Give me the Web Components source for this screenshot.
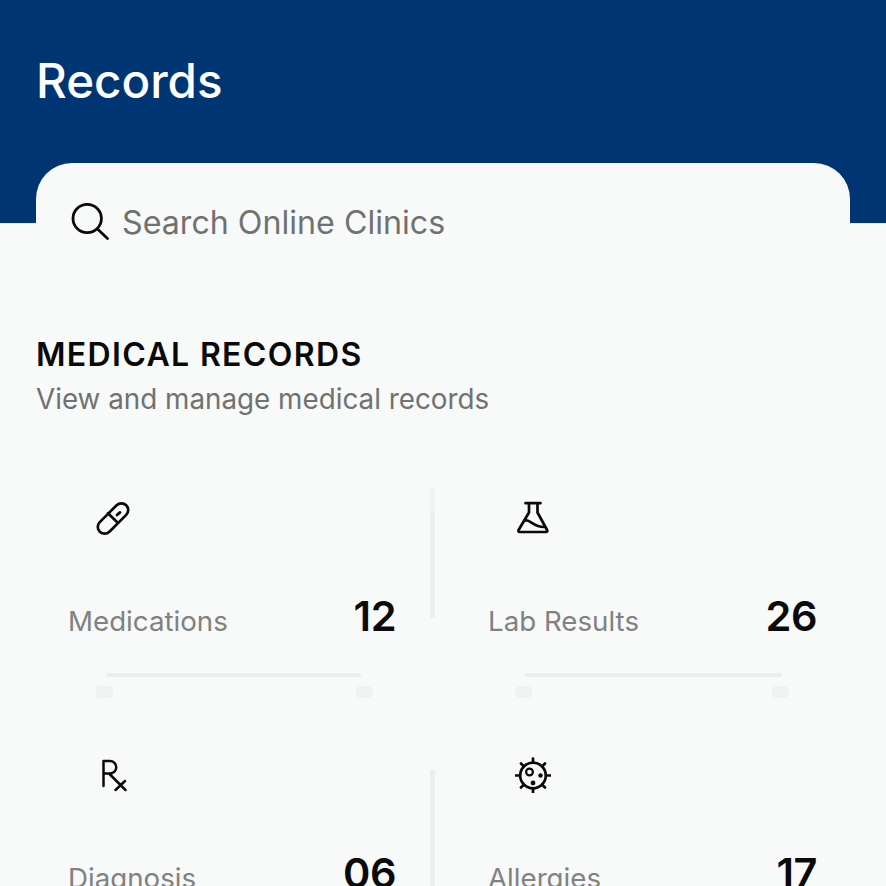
<!DOCTYPE html>
<html><head><meta charset="utf-8"><style>
html,body{margin:0;height:886px;overflow:hidden;background:#f8f9f9;font-family:Inter,"Noto Sans",sans-serif}
</style></head><body>
<records-page></records-page>
<template id="tile-t"><style>
:host{display:flex;flex-direction:column;height:257px;box-sizing:border-box;padding:0 var(--pr,37px) 0 var(--pl,32px);position:relative}
.ic{height:36px;width:36px;margin:0 0 0 27px}
.row{display:flex;justify-content:space-between;align-items:baseline;margin-top:62px;line-height:36px}
.l{font-size:27.7px;color:#808280}
.n{font-size:41.5px;font-weight:600;color:#0a0a0a;letter-spacing:-.5px}
</style><div class="ic"><slot name="icon"></slot></div><div class="row"><span class="l"><slot name="label"></slot></span><span class="n"><slot name="num"></slot></span></div></template>
<script>
class RecordTile extends HTMLElement{constructor(){super();this.attachShadow({mode:'open'}).append(document.getElementById('tile-t').content.cloneNode(true))}}
customElements.define('record-tile',RecordTile);
class SearchCard extends HTMLElement{constructor(){super();this.attachShadow({mode:'open'}).innerHTML=`<style>
:host{display:flex;align-items:center;gap:12px;box-sizing:border-box;height:118px;margin:-61px 36px 0;padding:0 34px 0 34px;background:#f8f9f9;border-radius:36px 36px 0 0;position:relative;color:#707270;font-size:32.2px}
svg{width:40px;height:40px;fill:none;stroke:#0a0a0a;stroke-width:2.8;stroke-linecap:round}
</style><svg viewBox="0 0 40 40"><circle cx="17.2" cy="16.5" r="14.2"/><path d="M27.5 27L37.5 36.5"/></svg><span><slot></slot></span>`}}
customElements.define('search-card',SearchCard);
class RecordsPage extends HTMLElement{constructor(){super();this.attachShadow({mode:'open'}).innerHTML=`<style>
:host{display:block}
header{height:224px;box-sizing:border-box;background:#003574;padding:51px 36px 0;color:#fff;border-bottom:1px solid #e4e6e8;}
h1{margin:0;font-size:47.5px;font-weight:500;line-height:60px}
section{padding:52px 36px 0}
h2{margin:0;font-size:32px;letter-spacing:1.35px;font-weight:600;line-height:44px;color:#0a0a0a}
p{margin:0;font-size:27.8px;line-height:45px;color:#707270}
.grid{display:grid;grid-template-columns:397px 417px;position:relative;padding-top:78px}
.v,.h,.b{position:absolute;background:#eceded}
.v{width:5px;left:394px}
.h{height:4px;top:251px}
.b{width:17px;height:12px;top:264px;background:#f1f2f2;border-radius:4px}
.f{background:#f1f2f2}
</style><header><h1>Records</h1></header>
<search-card>Search Online Clinics</search-card>
<section><h2>MEDICAL RECORDS</h2><p>View and manage medical records</p>
<div class="grid">
<span class="v f" style="top:65px;height:26px"></span>
<span class="v" style="top:91px;height:105px"></span>
<span class="v" style="top:348px;height:116px"></span>
<span class="h" style="left:71px;width:254px"></span>
<span class="h" style="left:489px;width:257px"></span>
<span class="b" style="left:60px"></span><span class="b" style="left:320px"></span>
<span class="b" style="left:479px"></span><span class="b" style="left:736px"></span>
<slot></slot></div></section>`}}
customElements.define('records-page',RecordsPage);
</script>
<script>
const rp=document.querySelector('records-page');
rp.innerHTML=`
<record-tile><svg slot="icon" viewBox="0 0 36 36" width="36" height="36" fill="none" stroke="#0a0a0a" stroke-width="2.7" stroke-linecap="round" stroke-linejoin="round"><rect x="-6.8" y="-18.7" width="13.6" height="37.4" rx="6.8" transform="translate(18 18.5) rotate(45)"/><path d="M13 13.3L21.7 21.7"/><path d="M22 15L25 12.4" stroke-width="2.8"/></svg><span slot="label">Medications</span><span slot="num">12</span></record-tile>
<record-tile style="--pl:55px;--pr:33px"><svg slot="icon" viewBox="0 0 36 36" width="36" height="36" fill="none" stroke="#0a0a0a" stroke-width="2.7" stroke-linecap="round" stroke-linejoin="round"><path d="M10.5 3.2H25.5M14 3.2V12.5L3.6 30a1.3 1.3 0 0 0 1.1 2H31a1.3 1.3 0 0 0 1.1-2L22.5 12.5V3.2M8.5 21.5C14 17 17 27 29 27"/></svg><span slot="label">Lab Results</span><span slot="num">26</span></record-tile>
<record-tile><svg slot="icon" viewBox="0 0 36 36" width="36" height="36" fill="none" stroke="#0a0a0a" stroke-width="2.5" stroke-linecap="round" stroke-linejoin="round"><path d="M8.5 29V4H15a6.2 6.2 0 0 1 0 12.5H8.5M14 16.5L30.5 33M30 24L20.5 33"/></svg><span slot="label">Diagnosis</span><span slot="num">06</span></record-tile>
<record-tile style="--pl:55px;--pr:33px"><svg slot="icon" viewBox="0 0 36 36" width="36" height="36" fill="none" stroke="#0a0a0a" stroke-width="2.7" stroke-linecap="round"><circle cx="18" cy="18.5" r="12.8"/><path d="M18 1.5V5.5M18 31.5V35.5M.8 18.5H4.8M31.2 18.5H35.2M6 6.5L8.8 9.3M27.2 27.7L30 30.5M30 6.5L27.2 9.3M8.8 27.7L6 30.5"/><circle cx="14.5" cy="15" r="3.4" stroke-width="2.2"/><circle cx="25.5" cy="18.5" r="2.2" fill="#0a0a0a" stroke="none"/><circle cx="18" cy="26" r="2.4" fill="#0a0a0a" stroke="none"/></svg><span slot="label">Allergies</span><span slot="num">17</span></record-tile>`;
</script>
</body></html>
